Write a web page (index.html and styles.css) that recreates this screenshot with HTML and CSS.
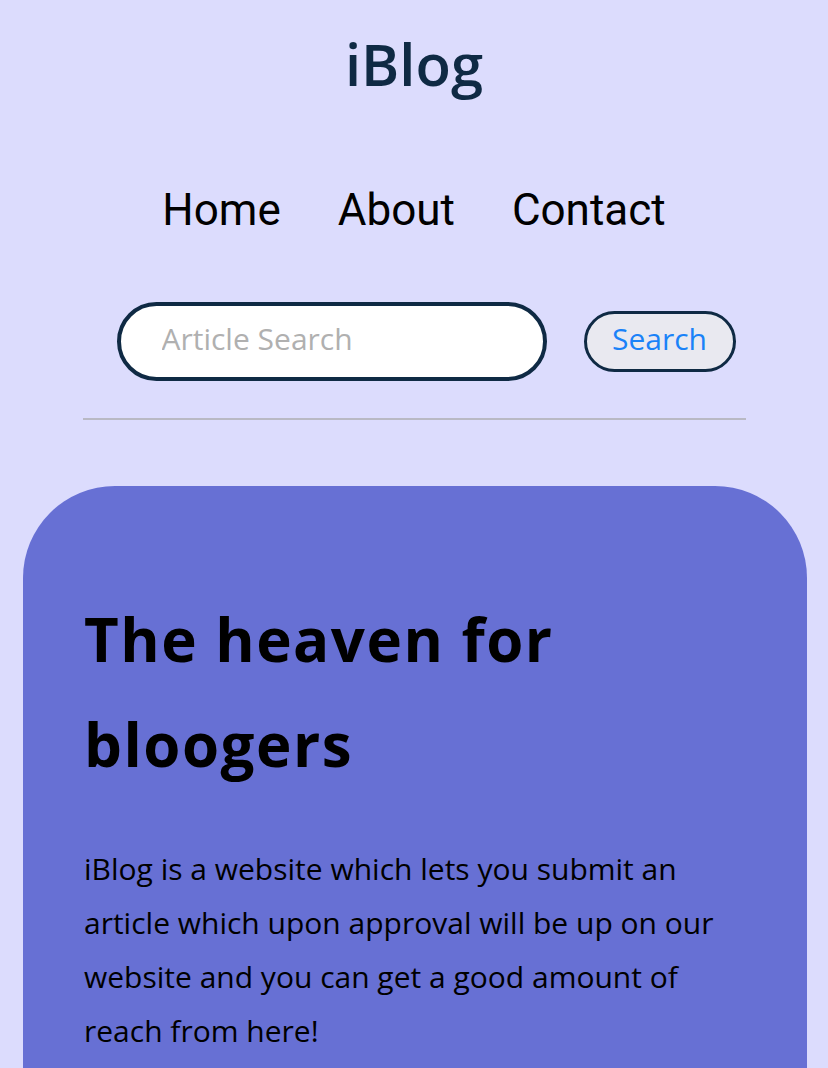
FILE: index.html
```html
<!DOCTYPE html>
<html lang="en">
<head>
<meta charset="utf-8">
<title>iBlog</title>
<link rel="stylesheet" href="styles.css">
</head>
<body>
<header class="site-header">
  <h1 class="logo">iBlog</h1>
  <nav class="nav">
    <a href="#" class="nav-link">Home</a>
    <a href="#" class="nav-link">About</a>
    <a href="#" class="nav-link">Contact</a>
  </nav>
  <form class="search" onsubmit="return false">
    <input class="search-input" type="text" placeholder="Article Search">
    <button class="search-btn" type="submit">Search</button>
  </form>
  <hr class="divider">
</header>
<main>
  <section class="hero">
    <h2 class="hero-title">The heaven for bloogers</h2>
    <p class="hero-text">iBlog is a website which lets you submit an article which upon approval will be up on our website and you can get a good amount of reach from here!</p>
  </section>
</main>
</body>
</html>
```

FILE: styles.css
```css
* { box-sizing: border-box; }
html, body { margin: 0; padding: 0; }
body {
  background: #dcdcfd;
  font-family: "Open Sans", "Noto Sans", sans-serif;
  color: #000;
  overflow: hidden;
}
.site-header {
  display: flex;
  flex-direction: column;
  align-items: center;
  padding-top: 26px;
}
.logo {
  margin: 0;
  font-family: "Open Sans", sans-serif;
  font-weight: 600;
  font-size: 58px;
  line-height: 76px;
  color: #0f2a44;
}
.nav {
  display: flex;
  gap: 57px;
  margin-top: 82px;
}
.nav-link {
  font-family: Roboto, sans-serif;
  font-size: 44px;
  line-height: 52px;
  color: #000;
  text-decoration: none;
}
.search {
  display: flex;
  align-items: center;
  gap: 37px;
  margin-top: 66px;
  margin-left: 24px;
}
.search-input {
  width: 430px;
  height: 79px;
  border: 4px solid #0f2a44;
  border-radius: 40px;
  background: #fff;
  padding: 0 0 7px 41px;
  font-family: "Open Sans", sans-serif;
  font-size: 30px;
  color: #333;
  outline: none;
}
.search-input::placeholder { color: #b0b0b0; }
.search-btn {
  width: 152px;
  height: 61px;
  border: 3px solid #0f2a44;
  border-radius: 31px;
  background: #e9e9f0;
  color: #1a82f8;
  font-family: "Open Sans", sans-serif;
  font-size: 30px;
  padding: 0 0 7px 0;
}
.divider {
  width: 663px;
  margin: 37px 0 0 0;
  border: 0;
  border-top: 2px solid #b9b9c4;
  align-self: center;
}
.hero {
  margin: 66px 21px 0 23px;
  background: #6770d4;
  border-radius: 92px;
  padding: 101px 60px 60px 61px;
  min-height: 700px;
}
.hero-title {
  margin: 0;
  font-family: "Open Sans", sans-serif;
  font-weight: 700;
  font-size: 60px;
  letter-spacing: 1.5px;
  line-height: 105px;
  color: #000;
  max-width: 560px;
}
.hero-text {
  margin: 45px 0 0 0;
  font-family: "Open Sans", sans-serif;
  font-size: 30px;
  line-height: 54px;
  color: #000;
  max-width: 640px;
}
```
